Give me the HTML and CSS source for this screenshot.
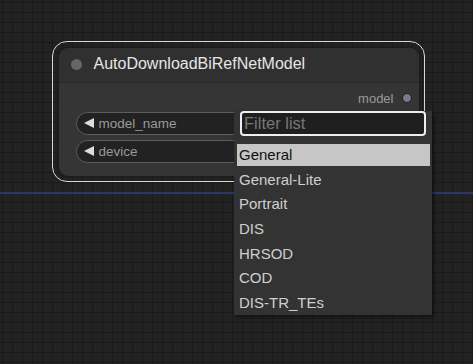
FILE: index.html
```html
<!DOCTYPE html>
<html>
<head>
<meta charset="utf-8">
<link rel="stylesheet" href="styles.css">
</head>
<body>
<div class="canvas">
  <div class="link-line"></div>
  <div class="node-outline">
    <div class="node">
      <div class="node-title">
        <span class="title-dot"></span>
        <span class="title-text">AutoDownloadBiRefNetModel</span>
      </div>
      <div class="node-body">
        <div class="output-row">
          <span class="output-label">model</span>
          <span class="output-dot"></span>
        </div>
        <div class="widgets">
          <div class="widget"><span class="arrow"></span><span class="widget-label">model_name</span></div>
          <div class="widget"><span class="arrow"></span><span class="widget-label">device</span></div>
        </div>
      </div>
    </div>
  </div>
  <div class="menu">
    <input class="filter" type="text" placeholder="Filter list">
    <div class="items">
      <div class="item selected">General</div>
      <div class="item">General-Lite</div>
      <div class="item">Portrait</div>
      <div class="item">DIS</div>
      <div class="item">HRSOD</div>
      <div class="item">COD</div>
      <div class="item">DIS-TR_TEs</div>
    </div>
  </div>
</div>
</body>
</html>
```
FILE: styles.css
```css
html, body {
  margin: 0;
  padding: 0;
  width: 473px;
  height: 364px;
  overflow: hidden;
}
body {
  font-family: "Liberation Sans", Arial, sans-serif;
  background-color: #222222;
  background-image:
    linear-gradient(to right, #1a1a1a 1px, transparent 1px),
    linear-gradient(to bottom, #1a1a1a 1px, transparent 1px);
  background-size: 10px 10px;
  background-position: 2px 2px;
}
.canvas {
  position: relative;
  width: 473px;
  height: 364px;
}
.link-line {
  position: absolute;
  left: 0;
  right: 0;
  top: 192px;
  height: 1.5px;
  background: #2b3766;
}
.node-outline {
  position: absolute;
  left: 52px;
  top: 41px;
  border: 1.5px solid #d8d8d8;
  border-radius: 15px;
  padding: 5.5px;
}
.node {
  width: 360px;
  height: 128px;
  background: #353535;
  border-radius: 9px;
  overflow: hidden;
  box-shadow: 0 0 3px rgba(0,0,0,0.5);
  display: flex;
  flex-direction: column;
}
.node-title {
  height: 34px;
  background: #303030;
  border-bottom: 1px solid #2c2c2c;
  display: flex;
  align-items: center;
  padding-left: 12px;
  gap: 12px;
}
.title-dot {
  width: 11px;
  height: 11px;
  border-radius: 50%;
  background: #666666;
}
.title-text {
  font-size: 16px;
  color: #e6e6e6;
  position: relative;
  top: -1px;
}
.node-body {
  padding: 8px 17px 0 17px;
  display: flex;
  flex-direction: column;
}
.output-row {
  display: flex;
  justify-content: flex-end;
  align-items: center;
  gap: 8px;
  height: 15px;
  margin-right: -10px;
}
.output-label {
  font-size: 13px;
  color: #9a9a9a;
}
.output-dot {
  width: 8px;
  height: 8px;
  border-radius: 50%;
  background: #787890;
  border: 1px solid #1c1c1c;
}
.widgets {
  margin-top: 6px;
  display: flex;
  flex-direction: column;
  gap: 5px;
}
.widget {
  height: 21px;
  border: 1px solid #5c5c5c;
  border-radius: 12px;
  background: #222222;
  display: flex;
  align-items: center;
  padding-left: 7px;
  gap: 5px;
}
.arrow {
  width: 0;
  height: 0;
  border-top: 5.5px solid transparent;
  border-bottom: 5.5px solid transparent;
  border-right: 10px solid #dddddd;
}
.widget-label {
  font-size: 13.5px;
  color: #999999;
}
.menu {
  position: absolute;
  left: 234px;
  top: 111px;
  width: 198px;
  height: 204px;
  background: #333333;
  box-shadow: 2px 2px 4px rgba(0,0,0,0.5);
  box-sizing: border-box;
  padding: 0 2px 0 3px;
}
.filter {
  display: block;
  box-sizing: border-box;
  margin: 0 0 0 3px;
  width: 186px;
  height: 24.5px;
  background: #1f1f1f;
  border: 2px solid #eeeeee;
  border-radius: 4px;
  padding: 0 2px;
  font-family: "Liberation Sans", Arial, sans-serif;
  font-size: 16.5px;
  color: #dddddd;
  outline: none;
}
.filter::placeholder {
  color: #777777;
}
.items {
  margin-top: 8.5px;
  display: flex;
  flex-direction: column;
  gap: 2.65px;
}
.item {
  height: 22px;
  line-height: 21px;
  padding-left: 2px;
  font-size: 15px;
  color: #cfcfcf;
}
.item.selected {
  background: #c6c6c6;
  color: #111111;
}
```
